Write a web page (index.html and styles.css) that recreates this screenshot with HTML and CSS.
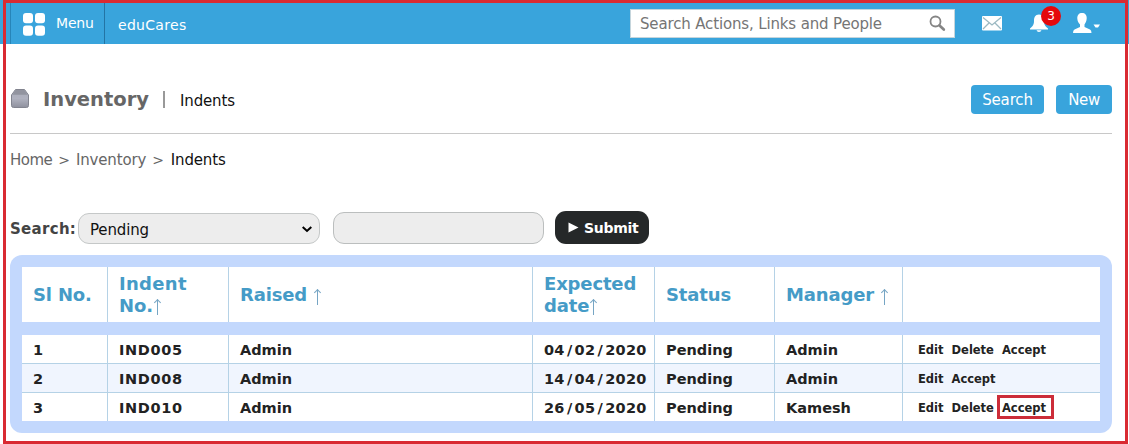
FILE: index.html
```html
<!DOCTYPE html>
<html lang="en">
<head>
<meta charset="utf-8">
<title>Inventory - Indents</title>
<link rel="stylesheet" href="styles.css">
</head>
<body>
<header class="topbar">
  <div class="menu">
    <svg class="menu-icon" width="22" height="23" viewBox="0 0 22 23" fill="#fff"><rect width="10" height="10.3" rx="3"/><rect x="12" width="10" height="10.3" rx="3"/><rect y="12.5" width="10" height="10.3" rx="3"/><rect x="12" y="12.5" width="10" height="10.3" rx="3"/></svg>
    <span class="menu-label">Menu</span>
  </div>
  <span class="brand">eduCares</span>
  <div class="finder">
    <span class="finder-text">Search Actions, Links and People</span>
    <svg width="17" height="17" viewBox="0 0 17 17" fill="none" stroke="#858585"><circle cx="6.500" cy="6.5" r="5" stroke-width="1.8"/><path d="M10.500 10.5L14.800 14.500" stroke-width="2.700" stroke-linecap="round"/></svg>
  </div>
  <svg class="mail" width="20" height="15" viewBox="0 0 20 15"><rect width="20" height="14.5" rx="1" fill="#fff"/><path d="M1 1.5L10 9L19 1.5M1 13L7 7M19 13L13 7" fill="none" stroke="#9cb9c2" stroke-width="1.3"/></svg>
  <div class="alerts">
    <svg width="18" height="18" viewBox="0 0 18 18" fill="#fff"><path d="M9 0.5C5 0.5 4 3.500 4 7C4 11 2.500 12.500 0 14.500V15.500H18V14.500C15.500 12.500 14 11 14 7C14 3.500 13 0.500 9 0.500ZM6.500 16.300H11.500Q11 18 9 18T6.500 16.300Z"/></svg>
    <span class="badge">3</span>
  </div>
  <svg class="user" width="28" height="21" viewBox="0 0 28 21" fill="#fff"><path d="M9 0C12 0 14 2 13.700 5.500C13.500 8.500 12.500 10 11.500 11.500V14L17 16.500Q18.500 17.300 18.500 20H0Q0 17.300 1.500 16.500L7 14V11.500C5.500 10 4.500 8.500 4.300 5.500C4.200 2 6 0 9 0ZM20.500 11.500H27L25 14.500H22.500Z"/></svg>
</header>
<main class="page">
  <div class="heading">
    <svg class="box-icon" width="18" height="19" viewBox="0 0 18 19"><defs><linearGradient id="g" x2="0" y2="1"><stop stop-color="#a9abb9"/><stop offset="0.5" stop-color="#b0b2bf"/><stop offset="1" stop-color="#8e909d"/></linearGradient></defs><path d="M4.500 0.500H13.500L17.500 6V16.500Q17.500 18.500 15.500 18.500H2.500Q0.500 18.500 0.500 16.500V6Z" fill="url(#g)" stroke="#82848f"/><path d="M4.500 1H13.500L16.500 5.700H1.500Z" fill="#92949f"/></svg>
    <h1 class="title">Inventory</h1>
    <span class="divider"></span>
    <span class="subtitle">Indents</span>
    <div class="actions"><span class="btn btn-search">Search</span><span class="btn btn-new">New</span></div>
  </div>
  <nav class="crumbs"><span class="home">Home</span><span class="gt">&gt;</span><span>Inventory</span><span class="gt">&gt;</span><span class="current">Indents</span></nav>
  <div class="filter">
    <span class="filter-label">Search:</span>
    <div class="select"><span>Pending</span><svg width="10" height="7" viewBox="0 0 10 7" fill="none" stroke="#000" stroke-width="2"><path d="M0.700 1L5 5L9.300 1"/></svg></div>
    <div class="input"></div>
    <div class="submit"><svg width="11" height="11" viewBox="0 0 11 11"><path d="M0.500 0.500L10.500 5.500L0.500 10.500Z" fill="#fff"/></svg><span>Submit</span></div>
  </div>
  <section class="table">
    <div class="row head">
      <div>Sl No.</div>
      <div><span><span class="loose">Indent</span><br>No.<i class="up tight"></i></span></div>
      <div>Raised<i class="up spaced"></i></div>
      <div><span>Expected<br>date<i class="up tight"></i></span></div>
      <div>Status</div>
      <div>Manager<i class="up spaced"></i></div>
      <div></div>
    </div>
    <div class="body">
      <div class="row"><div>1</div><div class="ind">IND005</div><div>Admin</div><div class="date">04<b>/</b>02<b>/</b>2020</div><div>Pending</div><div>Admin</div><div class="links"><a>Edit</a><a>Delete</a><a>Accept</a></div></div>
      <div class="row alt"><div>2</div><div class="ind">IND008</div><div>Admin</div><div class="date">14<b>/</b>04<b>/</b>2020</div><div>Pending</div><div>Admin</div><div class="links"><a>Edit</a><a>Accept</a></div></div>
      <div class="row"><div>3</div><div class="ind">IND010</div><div>Admin</div><div class="date">26<b>/</b>05<b>/</b>2020</div><div>Pending</div><div>Kamesh</div><div class="links"><a>Edit</a><a>Delete</a><a class="marked">Accept</a></div></div>
    </div>
  </section>
</main>
<div class="frame"></div>
</body>
</html>
```
FILE: styles.css
```css
*, *::before, *::after { box-sizing: border-box; }
body { margin: 0; width: 1129px; height: 444px; overflow: hidden; background: #fff; font-family: "DejaVu Sans", Verdana, sans-serif; font-size: 15px; letter-spacing: -0.15px; color: #222; }
svg { display: block; flex: none; }
.topbar { display: flex; height: 44px; padding-left: 10px; background: #39a4dc; color: #fff; }
.menu { display: flex; width: 95px; border-left: 1px solid #2785b8; border-right: 1px solid #2374a4; padding: 12px 0 0 12px; gap: 11px; }
.menu-icon { margin-top: 1px; }
.menu-label { font-size: 14px; line-height: 22px; letter-spacing: -0.2px; }
.brand { margin-left: 13px; padding-top: 14px; line-height: 22px; width: 499px; font-size: 14px; letter-spacing: 0.3px; }
.finder { display: flex; justify-content: space-between; width: 325px; height: 29px; margin: 9px 0 0 13px; padding: 0 8px 0 9px; border: 1px solid #c5d5dc; background: #fff; color: #757575; align-items: center; white-space: nowrap; }
.mail { margin: 16px 0 0 27px; }
.alerts { position: relative; margin: 14px 0 0 28px; }
.badge { position: absolute; left: 11px; top: -8px; width: 20px; height: 20px; border-radius: 50%; background: #e5080c; font-size: 12px; line-height: 20px; text-align: center; }
.user { margin: 13px 0 0 25px; }
.page { padding: 0 17px 0 10px; }
.heading { display: flex; align-items: center; height: 90px; padding-top: 21px; border-bottom: 1px solid #c8c8c8; }
.box-icon { margin: -2px 0 0 1px; }
.title { margin: 0 0 0 14px; font-size: 19.5px; letter-spacing: 0; color: #666; }
.divider { width: 2px; height: 17px; margin: 0 15px 0 14px; background: #999; }
.subtitle { margin-top: 3px; color: #111; }
.actions { display: flex; gap: 12px; margin-left: auto; }
.btn { height: 29px; border-radius: 4px; background: #39a4dc; color: #fff; line-height: 31px; text-align: center; }
.btn-search { width: 73px; }
.btn-new { width: 56px; letter-spacing: -0.4px; }
.crumbs { display: flex; height: 77px; padding-top: 15px; line-height: 22px; color: #666; }
.home { letter-spacing: -0.5px; }
.gt { margin: 0 6px; font-size: 14px; }
.current { margin-left: 1px; color: #111; }
.filter { display: flex; height: 44px; align-items: flex-start; }
.filter-label { width: 68px; font-weight: bold; letter-spacing: 0.3px; line-height: 36px; color: #444; }
.select { display: flex; align-items: center; justify-content: space-between; width: 242px; height: 31px; margin-top: 2px; padding: 2px 7px 0 11px; border: 1px solid #c5c8c8; border-radius: 11px; background: #ededed; color: #111; }
.input { width: 211px; height: 32px; margin: 1px 0 0 13px; border: 1px solid #bbbebe; border-radius: 11px; background: #ededed; }
.submit { display: flex; align-items: center; gap: 5px; width: 94px; height: 33px; margin-left: 11px; padding-left: 13px; border-radius: 11px; background: #252829; color: #fff; font-weight: bold; font-size: 14px; letter-spacing: -0.3px; }
.table { height: 178px; padding: 12px; border-radius: 12px; background: #c3d8fd; }
.row { display: grid; grid-template-columns: 86px 121px 304px 122px 120px 128px 1fr; height: 29px; background: #fff; border-bottom: 1px solid #b5d2e6; font-weight: bold; font-size: 14.5px; letter-spacing: 0; }
.row > div { display: flex; align-items: center; padding: 1px 0 0 11px; border-right: 1px solid #b5d2e6; white-space: nowrap; }
.row > div:last-child { border-right: 0; }
.row > .ind { letter-spacing: 0.65px; }
.row > .date { letter-spacing: 0.25px; }
.date b { padding: 0 2.2px; }
.body .row:last-child { border-bottom: 0; height: 28px; }
.alt { background: #f0f5fe; }
.head { height: 55px; margin-bottom: 13px; border: 0; font-size: 18px; line-height: 22px; letter-spacing: -0.15px; color: #459bc7; }
.loose { letter-spacing: 0.3px; }
.up { display: inline-block; position: relative; width: 7px; height: 16px; margin-left: 2px; vertical-align: -3px; background: linear-gradient(#76a5c4, #76a5c4) 3px 1px / 1px 15px no-repeat; }
.up::before { content: ""; position: absolute; left: 1px; top: 1px; width: 5px; height: 5px; border: solid #76a5c4; border-width: 1px 0 0 1px; transform: rotate(45deg); }
.up.spaced { margin: 3px 0 0 7px; }
.up.tight { margin-left: 1px; }
.row > .links { gap: 8px; padding: 2px 0 0 15px; font-size: 11.5px; letter-spacing: 0; }
.marked { position: relative; }
.marked::after { content: ""; position: absolute; left: -5px; top: -6px; width: 57px; height: 24px; border: 3px solid #cc2d39; }
.frame { position: absolute; left: 3px; top: 0; width: 1125px; height: 444px; border: 3px solid #d92a32; pointer-events: none; }
```
